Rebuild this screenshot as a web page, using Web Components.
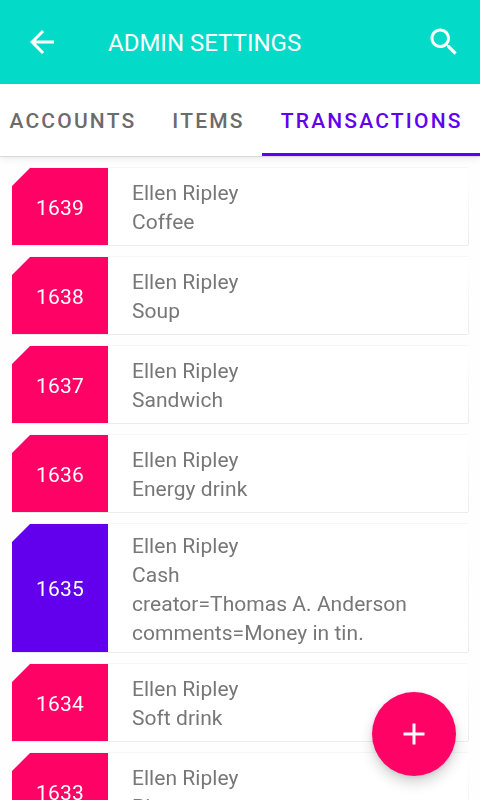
<!DOCTYPE html>
<html lang="en">
<head>
<meta charset="utf-8">
<title>Admin settings</title>
<style>
html, body { margin: 0; height: 100%; overflow: hidden; background: #fefefe; font-family: Roboto, sans-serif; }
</style>
</head>
<body>
<admin-screen></admin-screen>
<script>
class BaseElement extends HTMLElement {
  constructor() {
    super();
    this.attachShadow({ mode: 'open' }).innerHTML = this.constructor.markup;
  }
}

customElements.define('app-bar', class extends BaseElement {
  static markup = `<style>
    :host { display: flex; align-items: center; height: 84px; flex: none; box-sizing: border-box; padding: 0 18px 0 24px; background: #03dbc8; color: #fff; }
    .title { margin-left: 48px; flex: 1; font-size: 24px; line-height: 36px; white-space: nowrap; padding-top: 2px; }
    svg { width: 36px; height: 36px; fill: currentColor; display: block; }
  </style>
  <svg viewBox="0 0 24 24"><path d="M20 11H7.83l5.59-5.59L12 4l-8 8 8 8 1.41-1.41L7.83 13H20z"/></svg>
  <span class="title"><slot></slot></span>
  <svg viewBox="0 0 24 24"><path d="M15.5 14h-.79l-.28-.27C15.41 12.59 16 11.11 16 9.5 16 5.91 13.09 3 9.5 3S3 5.91 3 9.5 5.91 16 9.5 16c1.61 0 3.09-.59 4.23-1.57l.27.28v.79l5 4.99L20.49 19l-4.99-5zm-6 0C7.01 14 5 11.99 5 9.5S7.01 5 9.5 5 14 7.01 14 9.5 11.99 14 9.5 14z"/></svg>`;
});

customElements.define('tab-item', class extends BaseElement {
  static markup = `<style>
    :host { display: flex; align-items: center; flex: none; box-sizing: border-box; height: 72px; padding: 4px 17.3px 0 18.7px; font-size: 21px; font-weight: 500; letter-spacing: 2.2px; color: #6b6b6b; white-space: nowrap; border-bottom: 3px solid transparent; }
    :host([selected]) { color: #6200ee; border-bottom-color: #6200ee; }
  </style><slot></slot>`;
});

customElements.define('tab-bar', class extends BaseElement {
  static markup = `<style>
    :host { display: flex; justify-content: flex-end; flex: none; height: 72px; background: #fff; position: relative; z-index: 1; box-shadow: 0 1px 1px rgba(0,0,0,.1), 0 3px 7px rgba(0,0,0,.07); }
  </style><slot></slot>`;
});

customElements.define('transaction-card', class extends BaseElement {
  static markup = `<style>
    :host { display: flex; flex: none; position: relative; min-height: 77px; filter: drop-shadow(0 1px .7px rgba(0,0,0,.07)); --top: 7px; }
    :host::before { content: ""; position: absolute; left: 18px; right: 0; top: -1px; height: 1px; background: #f6f6f6; }
    :host::after { content: ""; position: absolute; left: 100%; top: 12px; bottom: 0; width: 1px; background: linear-gradient(transparent, rgba(0,0,0,.07)); }
    .shape { display: flex; flex: 1; background: #fff; clip-path: polygon(18px 0, 100% 0, 100% 100%, 0 100%, 0 18px); }
    .badge { display: flex; align-items: center; justify-content: center; width: 96px; background: var(--badge, #ff0266); color: #fff; font-size: 21px; letter-spacing: .2px; padding-top: 2px; box-sizing: border-box; }
    .text { display: flex; flex-direction: column; justify-content: center; padding: var(--top) 24px calc(12px - var(--top)); font-size: 21px; line-height: 29px; letter-spacing: .04px; color: #777; }
    :host([cash]) { --badge: #6200ee; --top: 8px; }
  </style>
  <div class="shape"><div class="badge"><slot name="number"></slot></div><div class="text"><slot></slot></div></div>`;
});

customElements.define('add-button', class extends BaseElement {
  static markup = `<style>
    :host { position: absolute; z-index: 2; right: 24px; bottom: 24px; width: 84px; height: 84px; border-radius: 50%; background: #ff0266; display: flex; align-items: center; justify-content: center; box-shadow: 0 7px 13px rgba(0,0,0,.17), 0 1px 4px rgba(0,0,0,.1); }
    svg { width: 36px; height: 36px; fill: #fff; }
  </style>
  <svg viewBox="0 0 24 24"><path d="M19 13h-6v6h-2v-6H5v-2h6V5h2v6h6z"/></svg>`;
});

customElements.define('admin-screen', class extends BaseElement {
  static markup = `<style>
    :host { display: flex; flex-direction: column; position: relative; width: 480px; height: 800px; overflow: hidden; background: #fefefe; }
    .list { display: flex; flex-direction: column; gap: 12px; padding: 12px; flex: 1; min-height: 0; overflow: hidden; }
  </style>
  <app-bar>ADMIN SETTINGS</app-bar>
  <tab-bar><tab-item>ACCOUNTS</tab-item><tab-item>ITEMS</tab-item><tab-item selected>TRANSACTIONS</tab-item></tab-bar>
  <div class="list">
    <transaction-card><span slot="number">1639</span><div>Ellen Ripley</div><div>Coffee</div></transaction-card>
    <transaction-card><span slot="number">1638</span><div>Ellen Ripley</div><div>Soup</div></transaction-card>
    <transaction-card><span slot="number">1637</span><div>Ellen Ripley</div><div>Sandwich</div></transaction-card>
    <transaction-card><span slot="number">1636</span><div>Ellen Ripley</div><div>Energy drink</div></transaction-card>
    <transaction-card cash><span slot="number">1635</span><div>Ellen Ripley</div><div>Cash</div><div>creator=Thomas A. Anderson</div><div>comments=Money in tin.</div></transaction-card>
    <transaction-card><span slot="number">1634</span><div>Ellen Ripley</div><div>Soft drink</div></transaction-card>
    <transaction-card><span slot="number">1633</span><div>Ellen Ripley</div><div>Pizza</div></transaction-card>
  </div>
  <add-button></add-button>`;
});
</script>
</body>
</html>
